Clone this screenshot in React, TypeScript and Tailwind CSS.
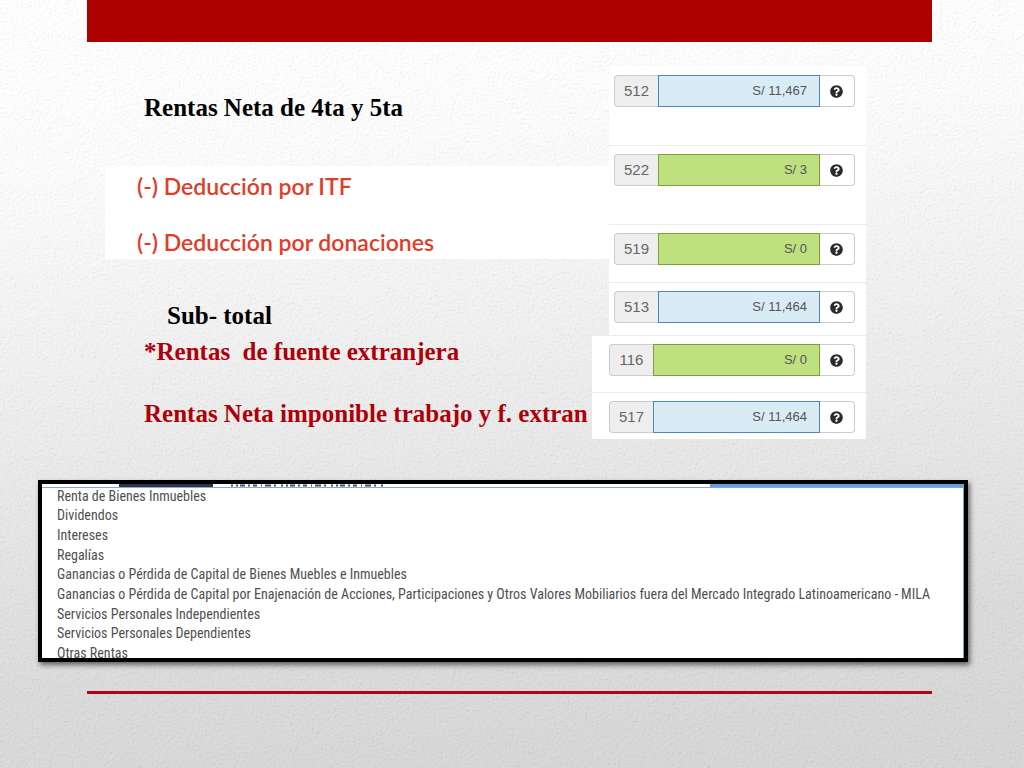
import React from "react";
import { FaQuestionCircle } from "react-icons/fa";

type Tone = "blue" | "green";

interface FieldProps {
  code: string;
  value: string;
  tone: Tone;
  label: string;
}

const tones: Record<Tone, string> = {
  blue: "bg-[#d9ecf6] border-[#4a86c0]",
  green: "bg-[#bfe07f] border-[#7f9f3a]",
};

function Field({ code, value, tone, label }: FieldProps) {
  const id = `casilla-${code}`;
  return (
    <div className="flex h-8 w-full">
      <label
        htmlFor={id}
        className="flex w-11 shrink-0 items-center justify-center rounded-l border border-r-0 border-[#cccccc] bg-[#eeeeee] text-[15px] text-[#666666]"
      >
        {code}
      </label>
      <input
        id={id}
        aria-label={`${code} ${label}`}
        defaultValue={value}
        className={`min-w-0 flex-1 border pr-3 text-right text-[13px] text-[#555555] outline-none ${tones[tone]}`}
      />
      <button
        type="button"
        aria-label={`Ayuda ${code}`}
        className="flex w-[35px] shrink-0 items-center justify-center rounded-r border border-l-0 border-[#cccccc] bg-white pr-0.5 text-[#2b2b2b]"
      >
        <FaQuestionCircle size={13} />
      </button>
    </div>
  );
}

const incomeTypes = [
  "Renta de Bienes Inmuebles",
  "Dividendos",
  "Intereses",
  "Regalías",
  "Ganancias o Pérdida de Capital de Bienes Muebles e Inmuebles",
  "Ganancias o Pérdida de Capital por Enajenación de Acciones, Participaciones y Otros Valores Mobiliarios fuera del Mercado Integrado Latinoamericano - MILA",
  "Servicios Personales Independientes",
  "Servicios Personales Dependientes",
  "Otras Rentas",
];

function PaperTexture() {
  return (
    <svg aria-hidden="true" className="pointer-events-none absolute inset-0 h-full w-full opacity-20">
      <filter id="paper" x="0" y="0" width="100%" height="100%">
        <feTurbulence type="fractalNoise" baseFrequency="0.45" numOctaves="3" seed="4" result="noise" />
        <feDiffuseLighting in="noise" lightingColor="#ffffff" surfaceScale="1.4" diffuseConstant="1.1">
          <feDistantLight azimuth="235" elevation="60" />
        </feDiffuseLighting>
      </filter>
      <rect width="100%" height="100%" filter="url(#paper)" />
    </svg>
  );
}

export default function App() {
  return (
    <div className="relative isolate min-h-screen overflow-hidden bg-[linear-gradient(175deg,#ffffff_0%,#fcfcfc_20%,#e9e9e9_50%,#d4d4d4_80%,#cccccc_100%)] font-['Liberation_Sans',Arial,sans-serif]">
      <div className="absolute inset-0 -z-10">
        <PaperTexture />
      </div>

      <header className="mr-[92px] ml-[87px] h-[42px] bg-[#ad0000]" />

      <main>
        <div className="mt-6 mr-[158px] ml-[105px] flex items-start">
          <section className="min-w-0 flex-1 font-['Liberation_Serif','Times_New_Roman',serif] text-[25px] leading-8 font-bold whitespace-nowrap">
            <h1 className="pt-[26px] pl-[39px] text-black">Rentas Neta de 4ta y 5ta</h1>
            <div className="mt-[42px] flex h-[93px] flex-col gap-6 bg-white pt-1 pl-8 font-['Lato',sans-serif] text-[23px] font-semibold text-[#e23c28]">
              <p>(-) Deducción por ITF</p>
              <p>(-) Deducción por donaciones</p>
            </div>
            <p className="mt-[41px] pl-[62px] text-black">Sub- total</p>
            <p className="mt-1 pl-[39px] whitespace-pre text-[#ad0008]">*Rentas  de fuente extranjera</p>
            <p className="mt-[30px] pl-[39px] text-[#ad0008]">
              Rentas Neta imponible trabajo y f. extran
            </p>
          </section>

          <section className="flex w-[257px] shrink-0 flex-col">
            <div className="divide-y divide-[#ebebeb] bg-white">
              <div className="h-20 pt-[9px] pr-[11px] pl-[5px]">
                <Field code="512" value="S/ 11,467" tone="blue" label="Rentas Neta de 4ta y 5ta" />
              </div>
              <div className="h-[79px] pt-2 pr-[11px] pl-[5px]">
                <Field code="522" value="S/ 3" tone="green" label="Deducción por ITF" />
              </div>
              <div className="h-[58px] pt-2 pr-[11px] pl-[5px]">
                <Field code="519" value="S/ 0" tone="green" label="Deducción por donaciones" />
              </div>
              <div className="h-[52px] pt-2 pr-[11px] pl-[5px]">
                <Field code="513" value="S/ 11,464" tone="blue" label="Sub- total" />
              </div>
            </div>
            <div className="-ml-[17px] divide-y divide-[#ebebeb] border-t border-[#ebebeb] bg-white">
              <div className="h-[57px] pt-2 pr-[11px] pl-[17px]">
                <Field code="116" value="S/ 0" tone="green" label="Rentas de fuente extranjera" />
              </div>
              <div className="h-[46px] pt-2 pr-[11px] pl-[17px]">
                <Field code="517" value="S/ 11,464" tone="blue" label="Rentas Neta imponible" />
              </div>
            </div>
          </section>
        </div>

        <section className="mt-[41px] mr-14 ml-[38px] h-[182px] overflow-hidden border-4 border-black bg-white shadow-[2px_3px_5px_rgba(0,0,0,0.55)]">
          <div className="flex h-full flex-col border-r border-[#7da7dc]">
            <div className="flex h-1 shrink-0 border-b border-[#8d9fdc]">
              <div className="ml-[77px] w-[94px] bg-[#30343f]" />
              <svg aria-hidden="true" className="ml-[17px] h-[3px] w-[154px]" viewBox="0 0 154 3">
                <path
                  d="M1 1.5H154"
                  stroke="#4b4f60"
                  strokeWidth="2"
                  strokeDasharray="2 3 2 2 5 3 2 3 4 4 1 3 6 3 2 5"
                />
              </svg>
              <div className="flex-1" />
              <div className="h-[3px] w-[27.5%] bg-[#649fd8]" />
            </div>
            <ul className="-mt-0.5 grid h-[177px] shrink-0 grid-rows-9 items-center pl-[15px] font-['Roboto_Condensed','Roboto','Liberation_Sans',sans-serif] text-sm leading-4 whitespace-nowrap text-[#505050]">
              {incomeTypes.map((item) => (
                <li key={item}>{item}</li>
              ))}
            </ul>
          </div>
        </section>
      </main>

      <footer className="mt-[29px] mr-[92px] ml-[87px] h-[3px] bg-[#ad0812]" />
    </div>
  );
}
